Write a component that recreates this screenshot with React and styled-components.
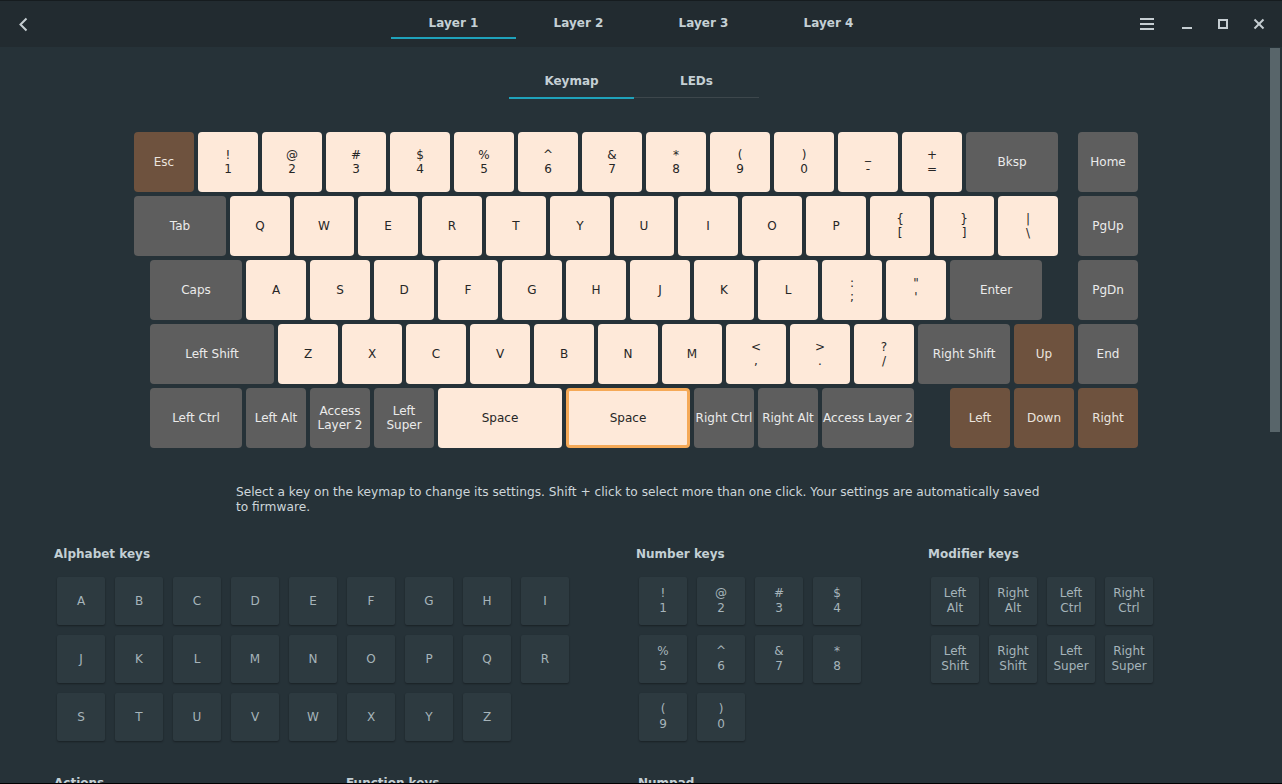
import React from 'react'
import styled, { createGlobalStyle } from 'styled-components'

const GlobalStyle = createGlobalStyle`
  html, body {
    margin: 0;
    padding: 0;
    background: #263238;
    overflow: hidden;
  }
  #root {
    height: 784px;
  }
`

const U = 64

const keyRows = [
  [
    { l: 'Esc', k: 'h' }, { l: '!\n1' }, { l: '@\n2' }, { l: '#\n3' }, { l: '$\n4' },
    { l: '%\n5' }, { l: '^\n6' }, { l: '&\n7' }, { l: '*\n8' }, { l: '(\n9' },
    { l: ')\n0' }, { l: '_\n-' }, { l: '+\n=' }, { l: 'Bksp', k: 'm', u: 1.5 },
    { l: 'Home', k: 'm', o: 0.25 },
  ],
  [
    { l: 'Tab', k: 'm', u: 1.5 }, { l: 'Q' }, { l: 'W' }, { l: 'E' }, { l: 'R' },
    { l: 'T' }, { l: 'Y' }, { l: 'U' }, { l: 'I' }, { l: 'O' }, { l: 'P' },
    { l: '{\n[' }, { l: '}\n]' }, { l: '|\n\\' }, { l: 'PgUp', k: 'm', o: 0.25 },
  ],
  [
    { l: 'Caps', k: 'm', u: 1.5, o: 0.25 }, { l: 'A' }, { l: 'S' }, { l: 'D' },
    { l: 'F' }, { l: 'G' }, { l: 'H' }, { l: 'J' }, { l: 'K' }, { l: 'L' },
    { l: ':\n;' }, { l: '"\n\'' }, { l: 'Enter', k: 'm', u: 1.5 },
    { l: 'PgDn', k: 'm', o: 0.5 },
  ],
  [
    { l: 'Left Shift', k: 'm', u: 2, o: 0.25 }, { l: 'Z' }, { l: 'X' }, { l: 'C' },
    { l: 'V' }, { l: 'B' }, { l: 'N' }, { l: 'M' }, { l: '<\n,' }, { l: '>\n.' },
    { l: '?\n/' }, { l: 'Right Shift', k: 'm', u: 1.5 }, { l: 'Up', k: 'h' },
    { l: 'End', k: 'm' },
  ],
  [
    { l: 'Left Ctrl', k: 'm', u: 1.5, o: 0.25 }, { l: 'Left Alt', k: 'm' },
    { l: 'Access\nLayer 2', k: 'm' }, { l: 'Left\nSuper', k: 'm' },
    { l: 'Space', u: 2 }, { l: 'Space', u: 2, sel: true },
    { l: 'Right Ctrl', k: 'm' }, { l: 'Right Alt', k: 'm' },
    { l: 'Access Layer 2', k: 'm', u: 1.5 },
    { l: 'Left', k: 'h', o: 0.5 }, { l: 'Down', k: 'h' }, { l: 'Right', k: 'h' },
  ],
]

const letters = 'ABCDEFGHIJKLMNOPQRSTUVWXYZ'.split('')

const sections = [
  { title: 'Alphabet keys', cols: 9, keys: letters },
  {
    title: 'Number keys',
    cols: 4,
    keys: ['!\n1', '@\n2', '#\n3', '$\n4', '%\n5', '^\n6', '&\n7', '*\n8', '(\n9', ')\n0'],
  },
  {
    title: 'Modifier keys',
    cols: 4,
    keys: [
      'Left\nAlt', 'Right\nAlt', 'Left\nCtrl', 'Right\nCtrl',
      'Left\nShift', 'Right\nShift', 'Left\nSuper', 'Right\nSuper',
    ],
  },
  { title: 'Actions', cols: 4, keys: ['Bksp', 'Del', 'Enter', 'Esc', 'Space', 'Tab'] },
  { title: 'Function keys', cols: 4, keys: ['F1', 'F2', 'F3', 'F4', 'F5', 'F6', 'F7', 'F8'] },
  { title: 'Numpad', cols: 4, keys: ['Num\n1', 'Num\n2', 'Num\n3', 'Num\n4'] },
]

const keyBg = { a: '#fee9d9', m: '#5e5e5e', h: '#6e523e' }
const keyFg = { a: '#262626', m: '#ebebeb', h: '#ebe4de' }

function App() {
  return (
    <>
      <GlobalStyle />
      <Window>
        <HeaderBar>
          <HeaderLeft>
            <IconButton>
              <svg width="24" height="24" viewBox="0 0 24 24">
                <polyline points="15.5,6.5 9.5,12.5 15.5,18.5" fill="none" stroke="#c6ced2" strokeWidth="2" />
              </svg>
            </IconButton>
          </HeaderLeft>

          <LayerTabs>
            {['Layer 1', 'Layer 2', 'Layer 3', 'Layer 4'].map((t, i) => (
              <LayerTab key={t} $active={i === 0}>{t}</LayerTab>
            ))}
          </LayerTabs>

          <WindowControls>
            <ControlButton $gap>
              <svg width="16" height="16" viewBox="0 0 16 16">
                <g stroke="#c6ced2" strokeWidth="2">
                  <line x1="1" y1="3" x2="15" y2="3" />
                  <line x1="1" y1="8" x2="15" y2="8" />
                  <line x1="1" y1="13" x2="15" y2="13" />
                </g>
              </svg>
            </ControlButton>
            <ControlButton>
              <svg width="16" height="16" viewBox="0 0 16 16">
                <line x1="3" y1="12" x2="13" y2="12" stroke="#c6ced2" strokeWidth="2" />
              </svg>
            </ControlButton>
            <ControlButton>
              <svg width="16" height="16" viewBox="0 0 16 16">
                <rect x="4" y="4" width="8" height="8" fill="none" stroke="#c6ced2" strokeWidth="2" />
              </svg>
            </ControlButton>
            <ControlButton>
              <svg width="16" height="16" viewBox="0 0 16 16">
                <g stroke="#c6ced2" strokeWidth="2">
                  <line x1="3.5" y1="3.5" x2="12.5" y2="12.5" />
                  <line x1="12.5" y1="3.5" x2="3.5" y2="12.5" />
                </g>
              </svg>
            </ControlButton>
          </WindowControls>
        </HeaderBar>

        <Content>
          <Page>
            <SubTabs>
              <SubTab $active>Keymap</SubTab>
              <SubTab>LEDs</SubTab>
            </SubTabs>

            <Keyboard>
              {keyRows.map((row, r) => (
                <KeyRow key={r}>
                  {row.map((k, i) => (
                    <Key
                      key={i}
                      $u={k.u || 1}
                      $o={k.o || 0}
                      $kind={k.k || 'a'}
                      $sel={k.sel}
                    >
                      {k.l}
                    </Key>
                  ))}
                </KeyRow>
              ))}
            </Keyboard>

            <Hint>
              Select a key on the keymap to change its settings. Shift + click to select more
              than one click. Your settings are automatically saved to firmware.
            </Hint>

            <Palette>
              {sections.map(s => (
                <Section key={s.title} $cols={s.cols}>
                  <SectionTitle>{s.title}</SectionTitle>
                  <PaletteGrid $cols={s.cols}>
                    {s.keys.map(k => (
                      <PaletteKey key={k}>{k}</PaletteKey>
                    ))}
                  </PaletteGrid>
                </Section>
              ))}
            </Palette>
          </Page>
          <ScrollThumb />
        </Content>
      </Window>
    </>
  )
}

const Window = styled.div`
  width: 1282px;
  height: 784px;
  box-sizing: border-box;
  display: flex;
  flex-direction: column;
  background: #263238;
  border-top: 1px solid #161c1f;
  border-bottom: 1px solid #000;
  font-family: "DejaVu Sans", "Noto Sans", sans-serif;
  overflow: hidden;
`

const HeaderBar = styled.header`
  height: 46px;
  flex: none;
  display: grid;
  grid-template-columns: 1fr auto 1fr;
  align-items: start;
  background: #222b30;
`

const HeaderLeft = styled.div`
  display: flex;
  align-items: center;
  height: 46px;
  padding-left: 11px;
`

const IconButton = styled.div`
  width: 24px;
  height: 24px;
  display: flex;
`

const LayerTabs = styled.nav`
  display: flex;
`

const LayerTab = styled.div`
  width: 125px;
  box-sizing: border-box;
  padding: 14px 0 6px;
  line-height: 16px;
  text-align: center;
  font-size: 12px;
  font-weight: bold;
  color: #c5d0d5;
  border-bottom: 2px solid ${p => (p.$active ? '#1fa2bb' : 'transparent')};
`

const WindowControls = styled.div`
  display: flex;
  justify-content: flex-end;
  height: 46px;
  padding-right: 5px;
`

const ControlButton = styled.div`
  width: 36px;
  height: 46px;
  display: flex;
  align-items: center;
  justify-content: center;
  margin-right: ${p => (p.$gap ? '4px' : '0')};
`

const Content = styled.main`
  flex: 1;
  position: relative;
  overflow: hidden;
  background: #263238;
`

const Page = styled.div`
  padding-right: 14px;
`

const SubTabs = styled.div`
  display: flex;
  justify-content: center;
  margin-top: 15px;
`

const SubTab = styled.div`
  width: 125px;
  box-sizing: border-box;
  padding: 11px 0 ${p => (p.$active ? '7px' : '8px')};
  margin-bottom: ${p => (p.$active ? '0' : '1px')};
  line-height: 16px;
  text-align: center;
  font-size: 12px;
  font-weight: bold;
  color: #c5d0d5;
  border-bottom: ${p => (p.$active ? '2px solid #1fa2bb' : '1px solid #3d474c')};
`

const Keyboard = styled.div`
  width: ${15.75 * U - 4}px;
  margin: 33px auto 0;
  position: relative;
  left: 2px;
  display: flex;
  flex-direction: column;
  gap: 4px;
`

const KeyRow = styled.div`
  display: flex;
  gap: 4px;
`

const Key = styled.div`
  box-sizing: border-box;
  flex: none;
  width: ${p => p.$u * U - 4}px;
  height: 60px;
  margin-left: ${p => p.$o * U}px;
  display: flex;
  align-items: center;
  justify-content: center;
  text-align: center;
  white-space: pre;
  font-size: 12px;
  line-height: 14px;
  border-radius: 4px;
  background: ${p => keyBg[p.$kind]};
  color: ${p => keyFg[p.$kind]};
  border: ${p => (p.$sel ? '3px solid #f5a957' : 'none')};
`

const Hint = styled.p`
  width: 810px;
  margin: 37px auto 0;
  position: relative;
  left: 7px;
  font-size: 12.2px;
  line-height: 15px;
  color: #cdd6da;
`

const Palette = styled.div`
  display: flex;
  flex-wrap: wrap;
  column-gap: 67px;
  row-gap: 34px;
  padding: 31px 54px 0;
`

const Section = styled.section`
  width: ${p => 3 + p.$cols * 58 - 10}px;
`

const SectionTitle = styled.h3`
  margin: 0 0 15px;
  font-size: 12px;
  line-height: 16px;
  font-weight: bold;
  color: #c3cfd4;
`

const PaletteGrid = styled.div`
  display: grid;
  grid-template-columns: repeat(${p => p.$cols}, 48px);
  gap: 10px;
  padding-left: 3px;
`

const PaletteKey = styled.div`
  width: 48px;
  height: 48px;
  display: flex;
  align-items: center;
  justify-content: center;
  text-align: center;
  white-space: pre;
  font-size: 12px;
  line-height: 15px;
  color: #a6b4ba;
  background: #2d3a40;
  border-radius: 2px;
  box-shadow: 0 1px 2px rgba(0, 0, 0, 0.35);
`

const ScrollThumb = styled.div`
  position: absolute;
  top: 1px;
  right: 2px;
  width: 10px;
  height: 384px;
  background: #58656a;
`

export default App
